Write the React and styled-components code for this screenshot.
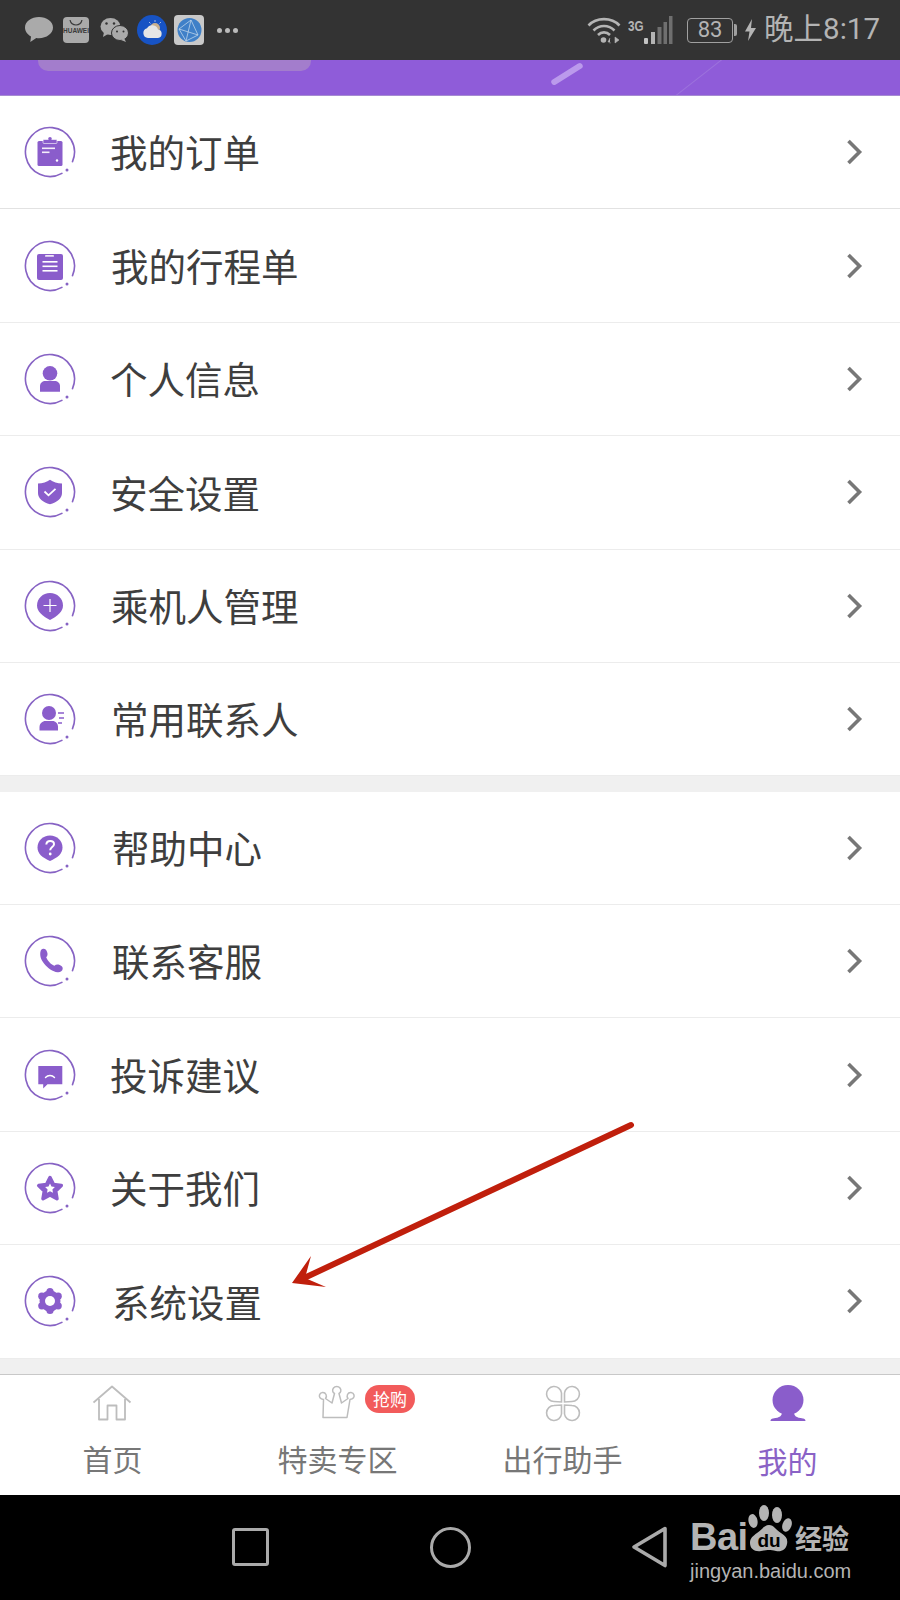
import React from 'react';
import styled, { createGlobalStyle } from 'styled-components';

const PURPLE = '#8a5dcb';
const RING = '#8763c4';
const TAB_GREY = '#bdbdbd';
const STATUS_GREY = '#b4b4b4';

const GlobalStyle = createGlobalStyle`
  html, body {
    margin: 0;
    padding: 0;
    background: #000;
  }

  body {
    font-family: "Noto Sans CJK SC", "Liberation Sans", sans-serif;
  }
`;

const Screen = styled.div`
  position: relative;
  display: flex;
  flex-direction: column;
  width: 900px;
  height: 1600px;
  overflow: hidden;
  background: #fff;
`;

const StatusBar = styled.header`
  display: flex;
  flex: 0 0 60px;
  align-items: center;
  justify-content: space-between;
  padding: 0 20px 0 25px;
  background: #333;
  color: ${STATUS_GREY};
`;

const StatusGroup = styled.div`
  display: flex;
  align-items: center;
  gap: ${({ $gap }) => $gap || 0}px;
`;

const HuaweiTile = styled.div`
  display: flex;
  flex-direction: column;
  align-items: center;
  justify-content: flex-start;
  width: 26px;
  height: 26px;
  border-radius: 4px;
  background: #aaa;
  color: #3a3a3a;
  font-family: "Liberation Sans", sans-serif;
  font-size: 6.5px;
  font-weight: 700;
  line-height: 8px;
  overflow: hidden;

  svg {
    display: block;
    margin: 3px 0 1px;
  }
`;

const MoreDots = styled.span`
  display: flex;
  gap: 3px;
  margin-left: 3px;

  i {
    width: 5px;
    height: 5px;
    border-radius: 50%;
    background: #bbb;
  }
`;

const ThreeG = styled.span`
  align-self: flex-start;
  width: 15px;
  margin-top: 3px;
  font-family: "Liberation Sans", sans-serif;
  font-size: 15px;
  font-weight: 700;
  line-height: 1;
  transform: scaleX(0.78);
  transform-origin: left top;
`;

const Battery = styled.div`
  display: flex;
  align-items: center;
  justify-content: center;
  box-sizing: border-box;
  width: 46px;
  height: 25px;
  margin-left: 14px;
  border: 1.5px solid #a0a0a0;
  border-radius: 4px;
  font-family: Roboto, sans-serif;
  font-size: 22px;
  line-height: 1;
`;

const BatteryNub = styled.span`
  width: 3px;
  height: 12px;
  margin-left: 1px;
  border-radius: 0 2px 2px 0;
  background: #a0a0a0;
`;

const Time = styled.span`
  margin-left: 8px;
  font-family: Roboto, "Noto Sans CJK SC", sans-serif;
  font-size: 29.5px;
  line-height: 1;
`;

const Banner = styled.div`
  position: relative;
  flex: 0 0 36px;
  box-sizing: border-box;
  border-bottom: 1px solid #a68bd2;
  background: #8f5cd9;
  overflow: hidden;
`;

const BannerCard = styled.div`
  position: absolute;
  top: -20px;
  left: 38px;
  width: 273px;
  height: 31px;
  border-radius: 10px;
  background: #a37dcc;
`;

const BannerStreak = styled.div`
  position: absolute;
  top: 11px;
  left: 549px;
  width: 36px;
  height: 6px;
  border-radius: 3px;
  background: #bb9aec;
  transform: rotate(-32deg);
`;

const BannerLine = styled.div`
  position: absolute;
  top: 17px;
  left: 664px;
  width: 70px;
  height: 1px;
  background: #9c72dc;
  transform: rotate(-38deg);
`;

const Group = styled.ul`
  margin: 0;
  padding: 0;
  list-style: none;
`;

const Row = styled.li`
  display: flex;
  align-items: center;
  box-sizing: border-box;
  height: 113.4px;
  padding: 0 36px 0 24px;
  border-bottom: 1px solid ${({ $strong }) => ($strong ? '#e2e2e2' : '#ececec')};
`;

const Label = styled.span`
  flex: 1;
  margin-left: ${({ $left }) => $left}px;
  padding-bottom: 2px;
  color: #3e3e3e;
  font-size: 37.5px;
  font-weight: 400;
  line-height: 1;
`;

const Divider = styled.div`
  flex: 0 0 15.3px;
  background: #f0f0f0;
`;

const TabBar = styled.nav`
  display: grid;
  flex: 0 0 121px;
  grid-template-columns: 225px 225px 225px 225px;
  box-sizing: border-box;
  border-top: 1px solid #c8c8c8;
  background: #fff;
`;

const Tab = styled.div`
  position: relative;
  display: flex;
  flex-direction: column;
  align-items: center;
  padding-top: 10px;
`;

const TabIcon = styled.svg`
  display: block;
  width: 40px;
  height: 38px;
`;

const TabLabel = styled.span`
  margin-top: ${({ $active }) => ($active ? 22 : 20)}px;
  color: ${({ $active }) => ($active ? '#8a62c6' : '#777')};
  font-size: 30px;
  line-height: 1;
`;

const Badge = styled.span`
  position: absolute;
  top: 10px;
  left: 140px;
  display: flex;
  align-items: center;
  justify-content: center;
  width: 50px;
  height: 28px;
  border-radius: 14px;
  background: #f25b5b;
  color: #fff;
  font-size: 17px;
  line-height: 1;
`;

const NavBar = styled.div`
  display: grid;
  flex: 1;
  grid-template-columns: 200px 200px 200px;
  align-items: center;
  justify-items: center;
  padding: 0 150px;
  background: #000;
`;

const Square = styled.div`
  box-sizing: border-box;
  width: 37px;
  height: 38px;
  border: 3.5px solid #aaa;
  border-radius: 3px;
`;

const Round = styled.div`
  box-sizing: border-box;
  width: 41px;
  height: 41px;
  border: 3.5px solid #aaa;
  border-radius: 50%;
`;

const Watermark = styled.div`
  position: absolute;
  top: 1505px;
  left: 690px;
  width: 165px;
  color: #b4b4b4;
  font-family: "Liberation Sans", sans-serif;
`;

const MarkRow = styled.div`
  display: flex;
  align-items: flex-end;
  height: 48px;
`;

const Bai = styled.span`
  width: 53px;
  font-size: 38px;
  font-weight: 700;
  line-height: 32px;
  letter-spacing: -0.5px;
`;

const Jingyan = styled.span`
  margin-left: 2px;
  font-family: "Noto Sans CJK SC", sans-serif;
  font-size: 27px;
  font-weight: 700;
  line-height: 30px;
  white-space: nowrap;
`;

const MarkUrl = styled.div`
  margin-top: 7px;
  font-size: 20px;
  line-height: 22px;
  white-space: nowrap;
`;

const Annotation = styled.svg`
  position: absolute;
  top: 0;
  left: 0;
  width: 900px;
  height: 1600px;
  pointer-events: none;
`;

const Glyph = ({ children }) => (
  <svg width="52" height="52" viewBox="0 0 52 52" style={{ flex: 'none' }}>
    <path
      d="M37.9 47.4A24.5 24.5 0 1 1 48.5 35.6"
      fill="none"
      stroke={RING}
      strokeWidth="1.6"
      strokeLinecap="round"
    />
    <circle cx="43" cy="44" r="1.5" fill={RING} />
    {children}
  </svg>
);

const icons = {
  order: (
    <>
      <rect x="13.5" y="15" width="25" height="25" rx="1.5" fill={PURPLE} />
      <rect x="19" y="13.5" width="14" height="4" rx="1" fill={PURPLE} stroke="#fff" strokeWidth="0.6" />
      <circle cx="26" cy="12.8" r="1.8" fill={PURPLE} />
      <rect x="18" y="21.5" width="13" height="1.6" fill="#fff" opacity="0.9" />
      <rect x="18" y="25.5" width="7.5" height="1.6" fill="#fff" opacity="0.9" />
      <circle cx="33" cy="34.5" r="1.2" fill="#fff" />
    </>
  ),
  trip: (
    <>
      <rect x="13" y="14" width="26" height="26" rx="2" fill={PURPLE} />
      <rect x="21" y="15" width="9" height="1.8" rx="0.9" fill="#fff" opacity="0.85" />
      <rect x="18.5" y="21" width="15" height="1.6" fill="#fff" />
      <rect x="18.5" y="25.5" width="15" height="1.6" fill="#fff" />
      <rect x="18.5" y="30" width="15" height="1.6" fill="#fff" />
    </>
  ),
  person: (
    <>
      <circle cx="26" cy="20.3" r="7.3" fill={PURPLE} />
      <path d="M16 38.7v-5.7c0-3 2.5-5 5.5-5h9c3 0 5.500 2 5.500 5v5.700z" fill={PURPLE} />
    </>
  ),
  shield: (
    <>
      <path
        d="M26 13.700c3 2.300 7.500 3.600 12 3.800v9.500c0 5.500-5 9.300-12 11.300-7-2-12-5.800-12-11.300v-9.500c4.500-.2 9-1.500 12-3.800z"
        fill={PURPLE}
      />
      <path d="M20.500 25.500l4 3.800 7-6.500" fill="none" stroke="#fff" strokeWidth="1.8" />
    </>
  ),
  passenger: (
    <>
      <path
        d="M26 13c7.200 0 13 5.500 13 12.500 0 6-5.500 10.500-13 14.500-7.500-4-13-8.500-13-14.500C13 18.500 18.800 13 26 13z"
        fill={PURPLE}
      />
      <path d="M26 19v13M19.500 25.500h13" stroke="#fff" strokeWidth="1.2" />
    </>
  ),
  contact: (
    <>
      <circle cx="25" cy="20" r="7" fill={PURPLE} />
      <path d="M15.500 37.500v-3.500c0-3.500 3-6 6-6h7c3 0 5.500 2.500 5.500 6v3.500z" fill={PURPLE} />
      <path d="M34 20h6M35 25h5M34 30h4" stroke={PURPLE} strokeWidth="1.500" />
    </>
  ),
  help: (
    <>
      <path
        d="M26 13.500c7 0 12.500 5.300 12.500 12 0 6.500-5 10-12.500 13.500-7.500-3.500-12.500-7-12.500-13.500 0-6.700 5.500-12 12.500-12z"
        fill={PURPLE}
      />
      <path
        d="M22.300 22.500c.2-2.200 1.800-3.500 3.900-3.500 2.200 0 3.800 1.300 3.800 3.200 0 2.900-3.800 2.800-3.800 6"
        fill="none"
        stroke="#fff"
        strokeWidth="2"
      />
      <circle cx="26.200" cy="32" r="1.400" fill="#fff" />
    </>
  ),
  phone: (
    <path
      d="M16.500 16.500C15.700 20 16.500 24 20 28.500c3.800 4.800 8.800 8 13.500 8.800 2.600.3 5-1 5.200-3.500.2-1.800-1-3-3-3.800-2.300-.9-4-.5-5.200.8-3-1-7-5-8.300-8.600 1.400-1.200 1.700-3 .9-5.200-.8-2.200-2.100-3.400-3.800-3.200-1.400.2-2.400 1-2.800 2.700z"
      fill={PURPLE}
    />
  ),
  complaint: (
    <>
      <path d="M14.300 17h24v18.300H23.500l-4.300 4.200v-4.200h-4.900z" fill={PURPLE} />
      <path d="M21.500 28.500c2.500-2.700 6.500-2.700 9 0" fill="none" stroke="#fff" strokeWidth="1.400" strokeLinecap="round" />
    </>
  ),
  about: (
    <>
      <path
        d="M26 15.500l3.500 7 7.800 1.100-5.600 5.400 1.300 7.700-7-3.700-7 3.700 1.300-7.700-5.600-5.400 7.800-1.100z"
        fill={PURPLE}
        stroke={PURPLE}
        strokeWidth="3.500"
        strokeLinejoin="round"
      />
      <path d="M26 21.500l1.500 3.100 3.400.5-2.500 2.400.6 3.300-3-1.600-3 1.600.6-3.300-2.500-2.400 3.400-.5z" fill="#fff" />
    </>
  ),
  settings: (
    <>
      <g fill={PURPLE}>
        <circle cx="26" cy="16.500" r="3.600" />
        <circle cx="34.200" cy="21.200" r="3.600" />
        <circle cx="34.200" cy="30.800" r="3.600" />
        <circle cx="26" cy="35.500" r="3.600" />
        <circle cx="17.800" cy="30.800" r="3.600" />
        <circle cx="17.800" cy="21.200" r="3.600" />
        <circle cx="26" cy="26" r="10.500" />
      </g>
      <circle cx="26" cy="26" r="5" fill="#fff" />
    </>
  ),
};

const Chevron = () => (
  <svg width="18" height="26" viewBox="0 0 18 26" style={{ flex: 'none' }}>
    <path d="M2.500 2l11 11-11 11" fill="none" stroke="#777" strokeWidth="3.600" />
  </svg>
);

const firstGroup = [
  { icon: 'order', text: '我的订单', left: 34, strong: true },
  { icon: 'trip', text: '我的行程单', left: 35 },
  { icon: 'person', text: '个人信息', left: 34 },
  { icon: 'shield', text: '安全设置', left: 34 },
  { icon: 'passenger', text: '乘机人管理', left: 35 },
  { icon: 'contact', text: '常用联系人', left: 35 },
];

const secondGroup = [
  { icon: 'help', text: '帮助中心', left: 36 },
  { icon: 'phone', text: '联系客服', left: 36 },
  { icon: 'complaint', text: '投诉建议', left: 34 },
  { icon: 'about', text: '关于我们', left: 34 },
  { icon: 'settings', text: '系统设置', left: 36 },
];

const MenuGroup = ({ items }) => (
  <Group>
    {items.map((item) => (
      <Row key={item.text} $strong={item.strong}>
        <Glyph>{icons[item.icon]}</Glyph>
        <Label $left={item.left}>{item.text}</Label>
        <Chevron />
      </Row>
    ))}
  </Group>
);

const App = () => (
  <Screen>
    <GlobalStyle />

    <StatusBar>
      <StatusGroup $gap={10}>
        <svg width="28" height="28" viewBox="0 0 28 28">
          <path
            d="M14 1C6.500 1 0 5.500 0 11.500c0 3.800 2.500 7 6 9l-.7 5.500 6-4c.9.100 1.800.2 2.700.2 7.500 0 14-4.700 14-10.700S21.500 1 14 1z"
            fill="#aaa"
          />
        </svg>
        <HuaweiTile>
          <svg width="14" height="6" viewBox="0 0 14 6">
            <path d="M1 0c1 4 3 5 6 5s5-1 6-5" fill="none" stroke="#3a3a3a" strokeWidth="1.200" />
          </svg>
          HUAWEI
        </HuaweiTile>
        <svg width="29" height="26" viewBox="0 0 29 26" style={{ marginLeft: 1 }}>
          <ellipse cx="10.500" cy="9.500" rx="10" ry="8.500" fill="#aaa" />
          <path d="M4 15l-1 5 5-3z" fill="#aaa" />
          <ellipse cx="20" cy="16" rx="8.500" ry="7.500" fill="#aaa" stroke="#333" strokeWidth="1" />
          <path d="M24 21l2 4-5-2z" fill="#aaa" />
          <circle cx="6.500" cy="6.500" r="1.200" fill="#333" />
          <circle cx="14" cy="6.500" r="1.200" fill="#333" />
          <circle cx="17" cy="14.500" r="1" fill="#333" />
          <circle cx="23.500" cy="14.500" r="1" fill="#333" />
        </svg>
        <svg width="30" height="30" viewBox="0 0 30 30" style={{ marginLeft: -2 }}>
          <circle cx="15" cy="15" r="15" fill="#1753c4" />
          <circle cx="18" cy="13" r="5" fill="#c9b08e" />
          <path d="M18 5v2M24 7l-1.500 1.500M12 7l1.500 1.500" stroke="#9fb9e5" strokeWidth="1" />
          <path d="M11 23a5 5 0 0 1-1-9.800 6 6 0 0 1 11 1.300 4.300 4.300 0 0 1 0 8.500z" fill="#e6e6e6" />
        </svg>
        <svg width="30" height="30" viewBox="0 0 30 30" style={{ marginLeft: -3 }}>
          <rect width="30" height="30" rx="4" fill="#c9c9c9" />
          <circle cx="15.500" cy="15" r="12" fill="#3f80c8" />
          <path d="M5 14l12-9 7 15-12 6zM5 14l19 6M17 5l-5 21" fill="none" stroke="#bcd3ea" strokeWidth="0.800" />
        </svg>
        <MoreDots>
          <i />
          <i />
          <i />
        </MoreDots>
      </StatusGroup>

      <StatusGroup>
        <svg width="34" height="28" viewBox="0 0 34 28" style={{ marginRight: 7 }}>
          <g fill="none" stroke={STATUS_GREY} strokeWidth="2.600">
            <path d="M1.500 9.500C9.500 1 24.500 1 32.500 9.500" />
            <path d="M6.500 14.500c6-6 15-6 21 0" />
            <path d="M11 19c3.500-3.500 8.500-3.500 12 0" />
          </g>
          <circle cx="16.500" cy="24" r="2.800" fill={STATUS_GREY} />
          <path d="M23 22l-2 4h2v1.500M28 21v6l4-3z" fill={STATUS_GREY} stroke={STATUS_GREY} strokeWidth="0.600" />
        </svg>
        <ThreeG>3G</ThreeG>
        <svg width="30" height="28" viewBox="0 0 30 28">
          <rect x="1" y="22" width="4" height="6" rx="1" fill="#c4c4c4" />
          <rect x="8" y="16" width="4" height="12" fill="#b4b4b4" />
          <rect x="14.500" y="11" width="4" height="17" fill="#6f6f6f" />
          <rect x="20.500" y="6" width="3.500" height="22" fill="#6f6f6f" />
          <rect x="26" y="0" width="3.500" height="28" fill="#6f6f6f" />
        </svg>
        <Battery>83</Battery>
        <BatteryNub />
        <svg width="11" height="22" viewBox="0 0 11 22" style={{ marginLeft: 8 }}>
          <path d="M7 0L0 12.500h4.500L3 22l8-13H6z" fill={STATUS_GREY} />
        </svg>
        <Time>晚上8:17</Time>
      </StatusGroup>
    </StatusBar>

    <Banner>
      <BannerCard />
      <BannerStreak />
      <BannerLine />
    </Banner>

    <MenuGroup items={firstGroup} />
    <Divider />
    <MenuGroup items={secondGroup} />
    <Divider />

    <TabBar>
      <Tab>
        <TabIcon viewBox="1 0 40 38">
          <path
            d="M1.500 17.500L20 1.500l18.500 16M7 14v20.500h8.500v-14h9v14H33V14"
            fill="none"
            stroke={TAB_GREY}
            strokeWidth="1.800"
            strokeLinejoin="round"
          />
        </TabIcon>
        <TabLabel>首页</TabLabel>
      </Tab>
      <Tab>
        <TabIcon viewBox="3 0 40 38">
          <path
            d="M8 34.500h24l3-18c3.500-.5 4.500-2.500 4-4.500-.7-2.800-5-3.500-6.500-.5-.6 1.300-.4 2.800.5 4L26.500 20l-2.500-9.500c2-1 2.500-3.500 1-5.500-1.500-2-5-2-6.500 0-1.500 2-1 4.500 1 5.500L17 20l-6.500-4.500c1-1.300 1.100-2.800.5-4-1.500-3-5.800-2.300-6.500.5-.5 2 .5 4 4 4.500z"
            transform="translate(0 -2)"
            fill="none"
            stroke={TAB_GREY}
            strokeWidth="1.500"
            strokeLinejoin="round"
          />
        </TabIcon>
        <Badge>抢购</Badge>
        <TabLabel>特卖专区</TabLabel>
      </Tab>
      <Tab>
        <TabIcon viewBox="0 0 40 38">
          <g fill="none" stroke={TAB_GREY} strokeWidth="1.600">
            <path d="M18.500 17V8a7.500 7.500 0 1 0-7.500 8.500z" />
            <path d="M21.500 17V8a7.500 7.500 0 1 1 7.500 8.500z" />
            <path d="M18.500 20v9a7.500 7.500 0 1 1-7.500-8.500z" />
            <path d="M21.500 20v9a7.500 7.500 0 1 0 7.500-8.500z" />
          </g>
        </TabIcon>
        <TabLabel>出行助手</TabLabel>
      </Tab>
      <Tab>
        <TabIcon viewBox="0 0 40 38">
          <ellipse cx="20" cy="15" rx="15.500" ry="15" fill={PURPLE} />
          <path d="M14 27h12c0 4 2 5.500 9 6.500 1.500.3 2.500 1 2.500 2.500h-35c0-1.500 1-2.200 2.500-2.500 7-1 9-2.500 9-6.500z" fill={PURPLE} />
        </TabIcon>
        <TabLabel $active>我的</TabLabel>
      </Tab>
    </TabBar>

    <NavBar>
      <Square />
      <Round />
      <svg width="38" height="42" viewBox="0 0 38 42">
        <path d="M34 2.500L3 21l31 18.500z" fill="none" stroke="#aaa" strokeWidth="3.600" strokeLinejoin="round" />
      </svg>
    </NavBar>

    <Watermark>
      <MarkRow>
        <Bai>Bai</Bai>
        <svg width="50" height="48" viewBox="0 0 50 48" style={{ flex: 'none' }}>
          <g fill="#b4b4b4">
            <ellipse cx="10" cy="16" rx="4.500" ry="7" transform="rotate(-12 10 16)" />
            <ellipse cx="21" cy="8" rx="5" ry="8" />
            <ellipse cx="34" cy="10" rx="5" ry="8" />
            <ellipse cx="44" cy="20" rx="4.500" ry="7" transform="rotate(20 44 20)" />
            <path d="M26 20c5 0 7 5 12 8 5 3 7 6 6 11-1 6-6 8-11 7-3-.6-5-1-7-1s-5 .4-8 1c-6 1-11-2-11-8 0-5 3-7 7-10 5-3 7-8 12-8z" />
          </g>
          <text x="26" y="42" textAnchor="middle" fontFamily="Liberation Sans" fontSize="19" fontWeight="700" fill="#000">
            du
          </text>
        </svg>
        <Jingyan>经验</Jingyan>
      </MarkRow>
      <MarkUrl>jingyan.baidu.com</MarkUrl>
    </Watermark>

    <Annotation viewBox="0 0 900 1600">
      <path d="M631 1125L302 1279" stroke="#c01f0c" strokeWidth="6" strokeLinecap="round" fill="none" />
      <path d="M292 1283L311 1256 305 1278 326 1287z" fill="#c01f0c" />
    </Annotation>
  </Screen>
);

export default App;
